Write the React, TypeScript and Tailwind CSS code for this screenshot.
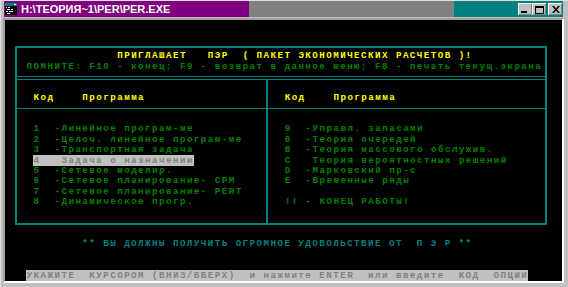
const mono = { fontFamily: '"Liberation Mono", "DejaVu Sans Mono", monospace' }

type RowProps = { children?: React.ReactNode; className?: string }

// 80x25 text grid: each cell is 6.975px wide, 10.44px tall
function Row({ children, className = '' }: RowProps) {
  return (
    <div
      className={`h-[10.44px] shrink-0 whitespace-pre text-[9.2px] leading-[10.44px] font-bold tracking-[1.455px] ${className}`}
    >
      {children}
    </div>
  )
}

function Line() {
  return <div className="h-px shrink-0 bg-[#008080]" />
}

const leftItems = [
  '1  -Линейное програм-ме',
  '2  -Целоч. линейное програм-ме',
  '3  -Транспортная задача',
  null,
  '5  -Сетевое моделир.',
  '6  -Сетевое планирование- CPM',
  '7  -Сетевое планирование- PERT',
  '8  -Динамическое прогр.',
]

const rightItems = [
  '9  -Управл. запасами',
  '0  -Теория очередей',
  'B  -Теория массового обслужив.',
  'C   Теория вероятностных решений',
  'D  -Марковский пр-с',
  'E  -Временные ряды',
  '',
  '!! - КОНЕЦ РАБОТЫ!',
]

function WinButton({ children }: { children: React.ReactNode }) {
  return (
    <div className="flex h-[12px] w-[14px] items-center justify-center border-t border-l border-white border-r-black border-b-black bg-[#c0c0c0] shadow-[inset_-1px_-1px_0_#808080]">
      {children}
    </div>
  )
}

export default function App() {
  return (
    <div className="flex h-[287px] w-[568px] flex-col overflow-hidden border-l border-t border-[#dfdfdf] bg-[#c0c0c0]">
      {/* title bar */}
      <div className="ml-[3px] mr-[5px] flex h-[16px] shrink-0">
        <div className="flex w-[245px] items-center gap-[4px] bg-[#800080] pl-[1px]">
          <svg width="12" height="12" viewBox="0 0 12 12" className="shrink-0">
            <rect x="0" y="0" width="12" height="12" fill="#c0c0c0" />
            <rect x="0" y="0" width="12" height="3" fill="#008080" />
            <rect x="0" y="3" width="12" height="9" fill="#000" />
            <rect x="1" y="4" width="1" height="1" fill="#fff" />
            <rect x="3" y="4" width="2" height="1" fill="#fff" />
            <rect x="2" y="6" width="3" height="1" fill="#fff" />
            <rect x="6" y="6" width="2" height="1" fill="#fff" />
            <rect x="1" y="8" width="2" height="1" fill="#fff" />
            <rect x="4" y="8" width="4" height="1" fill="#fff" />
            <rect x="2" y="10" width="3" height="1" fill="#fff" />
            <rect x="9" y="1" width="2" height="1" fill="#fff" />
          </svg>
          <span
            className="text-[11px] leading-none font-bold text-white"
            style={{ fontFamily: '"Liberation Sans", Arial, sans-serif' }}
          >
            H:\ТЕОРИЯ~1\PER\PER.EXE
          </span>
        </div>
        <div className="w-[205px] bg-[#808080]" />
        <div className="flex flex-1 items-center justify-end gap-[2px] bg-[#008080] pr-[1px]">
          <div className="flex">
            <WinButton>
              <div className="mt-[5px] mr-[3px] h-[2px] w-[6px] bg-black" />
            </WinButton>
            <WinButton>
              <div className="h-[8px] w-[9px] border border-t-2 border-black" />
            </WinButton>
          </div>
          <WinButton>
            <svg width="8" height="7" viewBox="0 0 8 7">
              <path d="M0 0h2l2 2.5L6 0h2L5 3.5 8 7H6L4 4.5 2 7H0l3-3.5z" fill="#000" />
            </svg>
          </WinButton>
        </div>
      </div>

      {/* dos screen */}
      <div className="mt-[1px] ml-[2px] mr-[4px] shrink-0 border-2 border-t-[#a0a0a0] border-l-[#a0a0a0] border-r-white border-b-white">
        <div className="flex h-[261px] flex-col bg-black" style={mono}>
          <div className="mt-[26px] ml-[10px] flex h-[179px] w-[532px] shrink-0 flex-col border-2 border-[#008080]">
            <div className="h-[3.3px] shrink-0" />
            <Row className="pl-[2.65px] text-[#ffff00]">
              {'              ПРИГЛАШАЕТ   ПЭР  ( ПАКЕТ ЭКОНОМИЧЕСКИХ РАСЧЕТОВ )!'}
            </Row>
            <Row className="pl-[2.65px] text-[#008000]">
              {' ПОМНИТЕ: F10 - конец; F9 - возврат в данное меню; F8 - печать текущ.экрана'}
            </Row>
            <div className="h-[3.8px] shrink-0" />
            <Line />
            <div className="h-[2px] shrink-0" />
            <Line />
            <div className="flex flex-1">
              <div className="flex w-[249px] flex-col">
                <div className="h-[13px] shrink-0" />
                <Row className="pl-[2.65px] text-[#ffff00]">{'  Код    Программа'}</Row>
                <div className="h-[4.2px] shrink-0" />
                <Line />
                <div className="h-[15.7px] shrink-0" />
                {leftItems.map((item, i) =>
                  item === null ? (
                    <Row key={i} className="pl-[1.95px]">
                      {'  '}
                      <span className="bg-[#c0c0c0] pl-[0.7px] text-[#808080]">
                        {'4  '}
                        <span className="text-[#c0c0c0]">-</span>
                        {'Задача о назначении'}
                      </span>
                    </Row>
                  ) : (
                    <Row key={i} className="pl-[2.65px] text-[#008000]">
                      {'  ' + item}
                    </Row>
                  ),
                )}
              </div>
              <div className="w-[2px] bg-[#008080]" />
              <div className="flex flex-1 flex-col">
                <div className="h-[13px] shrink-0" />
                <Row className="pl-[2.75px] text-[#ffff00]">{'  Код    Программа'}</Row>
                <div className="h-[4.2px] shrink-0" />
                <Line />
                <div className="h-[15.7px] shrink-0" />
                {rightItems.map((item, i) => (
                  <Row key={i} className="pl-[2.75px] text-[#008000]">
                    {'  ' + item}
                  </Row>
                ))}
              </div>
            </div>
          </div>
          <div className="h-[14px] shrink-0" />
          <Row className="pl-[0.7px] text-[#008080]">
            {'           ** ВЫ ДОЛЖНЫ ПОЛУЧИТЬ ОГРОМНОЕ УДОВОЛЬСТВИЕ ОТ  П Э Р **'}
          </Row>
          <div className="h-[21.2px] shrink-0" />
          <Row>
            {'   '}
            <span className="bg-[#c0c0c0] pl-[0.7px] text-[#808080]">
              УКАЖИТЕ  КУРСОРОМ (ВНИЗ/ВВЕРХ)  и нажмите ENTER  или введите  КОД  ОПЦИИ
            </span>
          </Row>
        </div>
      </div>
    </div>
  )
}
